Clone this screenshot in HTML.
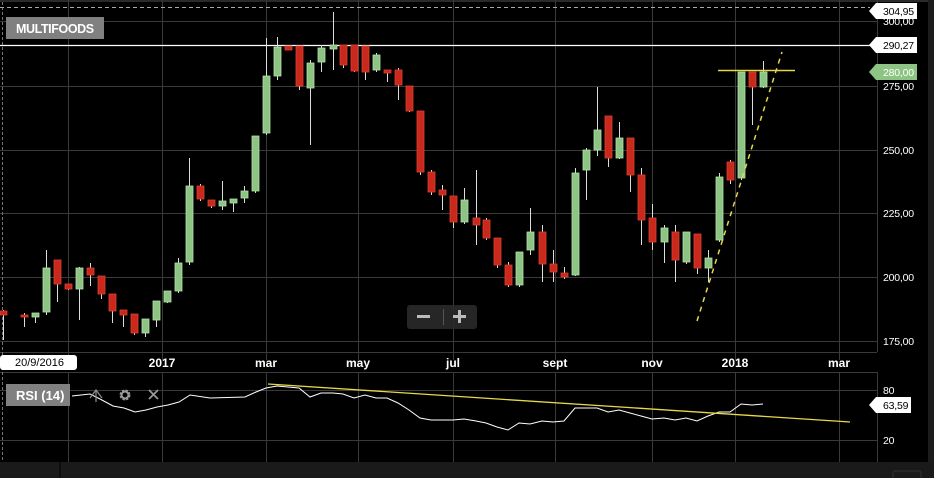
<!DOCTYPE html>
<html><head><meta charset="utf-8"><style>
html,body{margin:0;padding:0;background:#000;width:934px;height:478px;overflow:hidden;font-family:"Liberation Sans",sans-serif}
svg{display:block}
</style></head><body>
<svg id="s" width="934" height="478" xmlns="http://www.w3.org/2000/svg" font-family="Liberation Sans, sans-serif">
<rect width="934" height="478" fill="#000"/>
<rect x="0" y="0" width="934" height="2" fill="#2a2a2a"/>
<rect x="928" y="0" width="6" height="478" fill="#1c1c1c"/>
<rect x="0" y="462" width="934" height="16" fill="#1a1a1a"/>
<rect x="59" y="462" width="2" height="16" fill="#0d0d0d"/>
<rect x="893" y="471" width="28" height="10" fill="none" stroke="#333" rx="2"/>
<g stroke="#3a3a3a" stroke-width="1">
<line x1="877.5" y1="0" x2="877.5" y2="352"/>
<line x1="877.5" y1="372" x2="877.5" y2="462"/>
<line x1="0" y1="352.5" x2="877" y2="352.5"/>
<line x1="0" y1="372.5" x2="877" y2="372.5"/>
<line x1="0" y1="21.5" x2="877" y2="21.5"/>
<line x1="0" y1="86.5" x2="877" y2="86.5"/>
<line x1="0" y1="150.5" x2="877" y2="150.5"/>
<line x1="0" y1="213.5" x2="877" y2="213.5"/>
<line x1="0" y1="277.5" x2="877" y2="277.5"/>
<line x1="0" y1="341.5" x2="877" y2="341.5"/>
<line x1="0" y1="390.5" x2="877" y2="390.5"/>
<line x1="0" y1="440.5" x2="877" y2="440.5"/>
</g>
<g id="vg" stroke="#3a3a3a" stroke-width="1"></g>
<line x1="2.5" y1="2" x2="2.5" y2="462" stroke="#777" stroke-dasharray="3,2"/>
<line x1="0" y1="7.5" x2="870" y2="7.5" stroke="#aaa" stroke-dasharray="4,3"/>
<line x1="0" y1="45.5" x2="870" y2="45.5" stroke="#fff" stroke-width="1.2"/>
<g id="c"></g>
<line x1="718" y1="70.5" x2="795" y2="70.5" stroke="#e6d84a" stroke-width="1.5"/>
<line x1="697" y1="321" x2="782" y2="52" stroke="#e6d84a" stroke-width="1.5" stroke-dasharray="5,5"/>
<rect x="6" y="17" width="98" height="22" fill="#808080"/>
<text x="16" y="33" fill="#fff" font-size="12.5" font-weight="bold" letter-spacing="-0.4">MULTIFOODS</text>
<g font-size="10.5" fill="#fff" letter-spacing="-0.2">
<text x="883" y="25">300,00</text>
<text x="883" y="90">275,00</text>
<text x="883" y="154">250,00</text>
<text x="883" y="217">225,00</text>
<text x="883" y="281">200,00</text>
<text x="883" y="345">175,00</text>
<text x="883" y="394">80</text>
<text x="883" y="444">20</text>
</g>
<g font-size="10.5" letter-spacing="-0.2">
<path d="M869 11 L876 3 L917 3 L917 19 L876 19 Z" fill="#fff"/>
<text x="883" y="15" fill="#000">304,95</text>
<path d="M869 45 L876 37 L917 37 L917 53 L876 53 Z" fill="#fff"/>
<text x="883" y="49" fill="#000">290,27</text>
<path d="M869 72 L876 64 L917 64 L917 80 L876 80 Z" fill="#8dc483"/>
<text x="883" y="76" fill="#fff">280,00</text>
<path d="M869 405 L876 397 L911 397 L911 413 L876 413 Z" fill="#fff"/>
<text x="883" y="409" fill="#000">63,59</text>
</g>
<g font-size="12" fill="#fff" font-weight="bold" text-anchor="middle">
<text x="162" y="367">2017</text><text x="266" y="367">mar</text><text x="358" y="367">may</text>
<text x="453" y="367">jul</text><text x="555" y="367">sept</text><text x="652" y="367">nov</text>
<text x="735" y="367">2018</text><text x="839" y="367">mar</text>
</g>
<rect x="0" y="355" width="77" height="15" rx="3" fill="#fff"/>
<text x="15" y="366" font-size="11" fill="#000">20/9/2016</text>
<rect x="407" y="305" width="70" height="24" rx="3" fill="#2a2a2a" opacity="0.9"/>
<rect x="417" y="315" width="13" height="3" fill="#bbb"/>
<rect x="443" y="309" width="1" height="16" fill="#555"/>
<rect x="453" y="315" width="13" height="3" fill="#bbb"/><rect x="458" y="310" width="3" height="13" fill="#bbb"/>
<polyline id="rsi" fill="none" stroke="#fff" stroke-width="1"/>
<line x1="268" y1="384" x2="850" y2="422" stroke="#e6d84a" stroke-width="1.3"/>
<rect x="6" y="384" width="64" height="22" fill="#808080"/>
<text x="16" y="400" fill="#fff" font-size="13" font-weight="bold">RSI (14)</text>
<path d="M90 398 L96 390 L102 398 M96 390 L96 402" stroke="#888" fill="none" stroke-width="1.3"/>
<circle cx="125" cy="395" r="4" fill="none" stroke="#999" stroke-width="3" stroke-dasharray="2,1.2"/>
<circle cx="125" cy="395" r="3.5" fill="none" stroke="#999" stroke-width="2"/>
<path d="M149 390 L158 399 M158 390 L149 399" stroke="#999" stroke-width="1.8"/>
<script>
var NS="http://www.w3.org/2000/svg";
[68,162,266,358,453,555,652,735,839].forEach(function(x){
 [[0,352],[352,360],[372,462]].forEach(function(r){var l=document.createElementNS(NS,"line");l.setAttribute("x1",x+.5);l.setAttribute("x2",x+.5);l.setAttribute("y1",r[0]);l.setAttribute("y2",r[1]);document.getElementById("vg").appendChild(l);});
});
var d=[
[3,'r',311,315,310,340],[24,'r',315,317,313,327],[35,'g',313,317,313,323],[46,'g',268,312,250,315],
[57,'r',260,284,260,302],[68,'r',284,289,284,290],[79,'g',268,289,267,320],[90,'r',268,275,263,286],
[101,'r',276,294,276,299],[112,'r',294,311,294,323],[123,'r',310,315,310,327],[134,'r',314,333,314,335],
[145,'g',319,333,319,337],[156,'g',301,320,301,327],[167,'g',291,302,291,303],[178,'g',263,291,258,293],
[189,'g',186,262,158,265],[200,'r',186,199,184,201],[211,'r',200,206,200,208],[222,'g',201,206,181,210],
[233,'g',199,203,199,212],[244,'g',191,198,186,203],[255,'g',136,191,136,193],[266,'g',76,133,38,135],
[277,'g',47,76,37,80],[288,'r',46,50,46,50],[299,'r',46,86,46,90],[310,'g',63,88,60,145],
[321,'g',48,62,45,72],[333,'g',45,49,12,70],[343,'r',45,65,45,68],[354,'r',45,71,45,72],
[365,'r',46,72,46,80],[376,'g',55,70,53,72],[387,'r',70,73,70,82],[398,'r',70,85,68,100],
[409,'r',86,111,86,112],[420,'r',111,172,111,175],[431,'r',172,192,170,195],[442,'r',190,195,185,210],
[453,'r',196,222,196,228],[464,'g',200,222,188,224],[476,'r',218,225,170,245],[486,'r',220,238,218,240],
[497,'r',238,265,238,268],[508,'r',265,285,262,287],[519,'g',252,285,252,287],[530,'g',232,250,208,255],
[542,'r',232,264,225,282],[553,'r',264,272,250,282],[564,'r',273,277,267,279],[575,'g',173,275,168,276],
[586,'g',150,170,148,200],[597,'g',130,150,87,156],[608,'r',116,158,116,167],[619,'g',138,158,122,159],
[630,'r',138,175,138,192],[641,'r',175,220,168,245],[652,'r',218,242,204,250],[664,'g',228,242,225,263],
[675,'r',232,260,225,282],[686,'g',232,262,232,264],[697,'r',234,268,234,274],[708,'g',258,268,250,282],
[719,'g',177,240,173,242],[730,'r',162,180,160,184],[741,'g',72,178,72,180],[752,'r',72,87,72,125],
[763,'g',72,87,61,88]];
var g=document.getElementById("c");
d.forEach(function(c){
 var w=document.createElementNS(NS,"line");w.setAttribute("x1",c[0]+.5);w.setAttribute("x2",c[0]+.5);w.setAttribute("y1",c[4]);w.setAttribute("y2",c[5]);w.setAttribute("stroke","#ddd");g.appendChild(w);
 var r=document.createElementNS(NS,"rect");r.setAttribute("x",c[0]-3);r.setAttribute("y",c[2]);r.setAttribute("width",7);r.setAttribute("height",Math.max(2,c[3]-c[2]));
 r.setAttribute("fill",c[1]=='g'?'#8dc483':'#c9281d');r.setAttribute("stroke",c[1]=='g'?'#b4e0aa':'#e04030');r.setAttribute("stroke-width",".8");g.appendChild(r);
});
document.getElementById("rsi").setAttribute("points","72,396 90,394 100,399 113,406 124,408 135,412 146,410 157,407 168,405 179,402 190,395 210,398 245,397 256,392 266,388 277,386 288,387 299,388 310,397 321,393 333,393 343,394 354,398 365,395 376,398 387,398 398,403 409,410 420,418 431,420 442,420 453,420 464,419 476,421 486,423 497,427 508,430 519,423 530,424 542,421 553,422 564,421 575,408 586,408 597,408 608,412 619,410 630,413 641,416 652,419 664,418 675,420 686,418 697,421 708,416 719,412 730,412 741,404 752,405 763,404");
</script>
</svg>
</body></html>
